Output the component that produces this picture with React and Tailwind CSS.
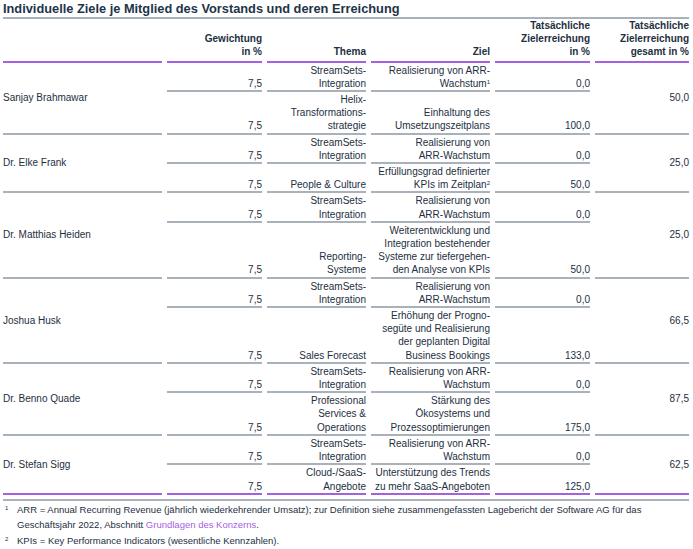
const PURPLE = 'border-[#a55fe3]'
const GRAY = 'border-[#a9b2bb]'

const members = [
  {
    name: 'Sanjay Brahmawar',
    total: '50,0',
    goals: [
      { thema: ['StreamSets-', 'Integration'], ziel: ['Realisierung von ARR-', <>Wachstum<sup className="text-[6px]">1</sup></>], value: '0,0' },
      { thema: ['Helix-', 'Transformations-', 'strategie'], ziel: ['Einhaltung des', 'Umsetzungszeitplans'], value: '100,0' },
    ],
  },
  {
    name: 'Dr. Elke Frank',
    total: '25,0',
    goals: [
      { thema: ['StreamSets-', 'Integration'], ziel: ['Realisierung von', 'ARR-Wachstum'], value: '0,0' },
      { thema: ['People & Culture'], ziel: ['Erfüllungsgrad definierter', <>KPIs im Zeitplan<sup className="text-[6px]">2</sup></>], value: '50,0' },
    ],
  },
  {
    name: 'Dr. Matthias Heiden',
    total: '25,0',
    goals: [
      { thema: ['StreamSets-', 'Integration'], ziel: ['Realisierung von', 'ARR-Wachstum'], value: '0,0' },
      {
        thema: ['Reporting-', 'Systeme'],
        ziel: ['Weiterentwicklung und', 'Integration bestehender', 'Systeme zur tiefergehen-', 'den Analyse von KPIs'],
        value: '50,0',
      },
    ],
  },
  {
    name: 'Joshua Husk',
    total: '66,5',
    goals: [
      { thema: ['StreamSets-', 'Integration'], ziel: ['Realisierung von', 'ARR-Wachstum'], value: '0,0' },
      {
        thema: ['Sales Forecast'],
        ziel: ['Erhöhung der Progno-', 'següte und Realisierung', 'der geplanten Digital', 'Business Bookings'],
        value: '133,0',
      },
    ],
  },
  {
    name: 'Dr. Benno Quade',
    total: '87,5',
    goals: [
      { thema: ['StreamSets-', 'Integration'], ziel: ['Realisierung von ARR-', 'Wachstum'], value: '0,0' },
      {
        thema: ['Professional', 'Services &', 'Operations'],
        ziel: ['Stärkung des', 'Ökosystems und', 'Prozessoptimierungen'],
        value: '175,0',
      },
    ],
  },
  {
    name: 'Dr. Stefan Sigg',
    total: '62,5',
    goals: [
      { thema: ['StreamSets-', 'Integration'], ziel: ['Realisierung von ARR-', 'Wachstum'], value: '0,0' },
      { thema: ['Cloud-/SaaS-', 'Angebote'], ziel: ['Unterstützung des Trends', 'zu mehr SaaS-Angeboten'], value: '125,0' },
    ],
  },
]

function Lines({ items }) {
  return items.map((l, i) => <div key={i}>{l}</div>)
}

function Cell({ children, line }) {
  return (
    <div className={`flex flex-col justify-end border-b-2 pt-[1px] text-right whitespace-nowrap ${line}`}>
      {children}
    </div>
  )
}

function Head({ children }) {
  return (
    <div className={`flex flex-col justify-end border-b-2 pb-[2px] text-right font-bold ${PURPLE}`}>
      {children}
    </div>
  )
}

function GoalRow({ goal, line, k }) {
  return [
    <Cell key={`${k}w`} line={line}>7,5</Cell>,
    <Cell key={`${k}t`} line={line}><Lines items={goal.thema} /></Cell>,
    <Cell key={`${k}z`} line={line}><Lines items={goal.ziel} /></Cell>,
    <Cell key={`${k}v`} line={line}>{goal.value}</Cell>,
  ]
}

export default function App() {
  return (
    <div
      className="w-[693px] bg-white pl-[3px] pr-[4px] text-[#1d2f41]"
      style={{ fontFamily: '"Liberation Sans", Arial, sans-serif' }}
    >
      <h1 className={`border-b-2 ${GRAY} pt-[1px] pb-[1px] text-[12.8px] leading-[15px] font-bold text-[#1e3449]`}>
        Individuelle Ziele je Mitglied des Vorstands und deren Erreichung
      </h1>

      <div className="grid grid-cols-[159px_95px_99px_119px_95px_94px] gap-x-[5px] text-[10px] leading-[13.2px]">
        <Head />
        <Head>
          <div>Gewichtung</div>
          <div>in %</div>
        </Head>
        <Head>Thema</Head>
        <Head>Ziel</Head>
        <Head>
          <div>Tatsächliche</div>
          <div>Zielerreichung</div>
          <div>in %</div>
        </Head>
        <Head>
          <div>Tatsächliche</div>
          <div>Zielerreichung</div>
          <div>gesamt in %</div>
        </Head>

        {members.map((m, mi) => {
          const last = mi === members.length - 1 ? PURPLE : GRAY
          const [g1, g2] = m.goals
          return [
            <div key={`${mi}n`} className={`row-span-2 flex items-center border-b-2 ${last}`}>
              {m.name}
            </div>,
            ...GoalRow({ goal: g1, line: GRAY, k: `${mi}a` }),
            <div key={`${mi}s`} className={`row-span-2 flex items-center justify-end border-b-2 ${last}`}>
              {m.total}
            </div>,
            ...GoalRow({ goal: g2, line: last, k: `${mi}b` }),
          ]
        })}
      </div>

      <div className={`mt-[4px] border-t-2 ${GRAY} pt-[1px] text-[9.5px] leading-[15.5px]`}>
        <div className="flex">
          <span className="w-[14px] shrink-0 pl-[2px] text-[6px] leading-[12px]">1</span>
          <p>
            ARR = Annual Recurring Revenue (jährlich wiederkehrender Umsatz); zur Definition siehe zusammengefassten
            Lagebericht der Software AG für das Geschäftsjahr 2022, Abschnitt{' '}
            <span className="text-[#a55fe3]">Grundlagen des Konzerns</span>.
          </p>
        </div>
        <div className="flex">
          <span className="w-[14px] shrink-0 pl-[2px] text-[6px] leading-[12px]">2</span>
          <p>KPIs = Key Performance Indicators (wesentliche Kennzahlen).</p>
        </div>
      </div>
    </div>
  )
}
